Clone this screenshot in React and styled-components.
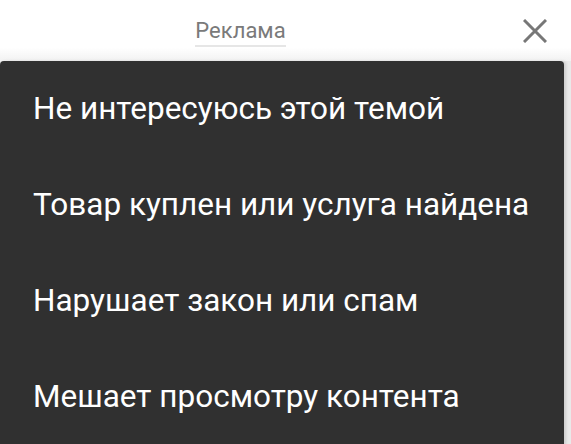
import React from "react";
import styled, { createGlobalStyle } from "styled-components";

const GlobalStyle = createGlobalStyle`
  html, body {
    margin: 0;
    padding: 0;
    background: #e9e9e9;
    font-family: Roboto, "Noto Sans", "Liberation Sans", sans-serif;
    -webkit-font-smoothing: antialiased;
  }
`;

const Page = styled.div`
  width: 571px;
  height: 444px;
  overflow: hidden;
  background: #e9e9e9;
`;

const Header = styled.div`
  display: flex;
  align-items: center;
  height: 61px;
  background: linear-gradient(to bottom, #ffffff 0%, #ffffff 78%, #f2f2f2 100%);
`;

const Title = styled.div`
  flex: 1;
  display: flex;
  justify-content: center;
  padding-top: 2px;
`;

const TitleText = styled.span`
  font-size: 22px;
  line-height: 27px;
  color: #7a7a7a;
  border-bottom: 2px solid #e6e6e6;
  padding-bottom: 1px;
`;

const CloseButton = styled.button`
  width: 90px;
  height: 61px;
  display: flex;
  align-items: center;
  justify-content: flex-end;
  padding: 0 24px 0 0;
  border: 0;
  background: transparent;
  cursor: pointer;
`;

const Panel = styled.div`
  width: 564px;
  background: #303030;
  border-radius: 4px 4px 0 0;
  box-shadow: 2px 0 3px rgba(0, 0, 0, 0.12);
`;

const Option = styled.div`
  height: 96px;
  line-height: 96px;
  padding-left: 33px;
  font-size: 31.5px;
  color: #ffffff;
  white-space: nowrap;
`;

const options = [
  "Не интересуюсь этой темой",
  "Товар куплен или услуга найдена",
  "Нарушает закон или спам",
  "Мешает просмотру контента",
];

export default function App() {
  return (
    <Page>
      <GlobalStyle />
      <Header>
        <Title>
          <TitleText>Реклама</TitleText>
        </Title>
        <CloseButton aria-label="Закрыть">
          <svg width="24" height="24" viewBox="0 0 24 24">
            <path d="M1 1 L23 23 M23 1 L1 23" stroke="#777" strokeWidth="3" />
          </svg>
        </CloseButton>
      </Header>
      <Panel>
        {options.map((text) => (
          <Option key={text}>{text}</Option>
        ))}
      </Panel>
    </Page>
  );
}
